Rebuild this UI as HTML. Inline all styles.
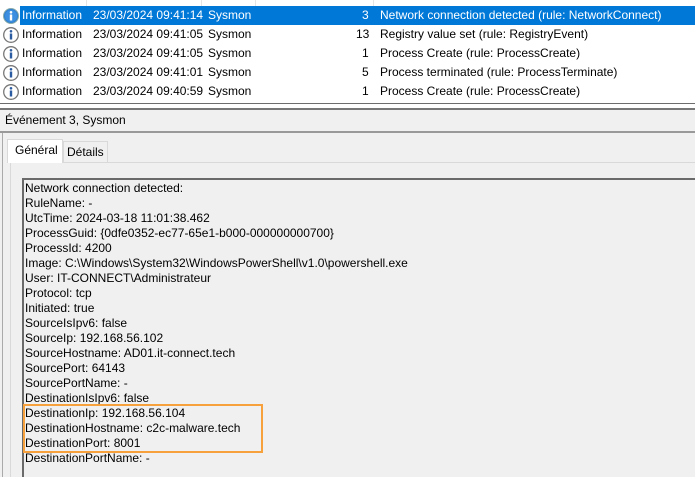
<!DOCTYPE html>
<html style="overflow:hidden;width:695px;height:477px"><head><meta charset="utf-8"><style>
*{margin:0;padding:0;box-sizing:border-box}
body{width:695px;height:477px;overflow:hidden;background:#f0f0f0;font-family:"Liberation Sans",sans-serif;font-size:12px;color:#000;position:relative}
.abs{position:absolute;white-space:nowrap}
.list{position:absolute;left:0;top:0;width:695px;height:103px;background:#fff}
.row{position:absolute;left:0;width:695px;height:19px;line-height:19px}
.sel{background:#0078d7;color:#fff}
.ic{position:absolute;left:3px;top:2px;width:16px;height:16px}
.line{position:absolute;left:0;width:695px}
.tl{position:absolute;left:25px;line-height:15px}
</style></head><body>
<div class="list">
 <div class="abs" style="left:86px;top:0;width:1px;height:6px;background:#e5e5e5"></div>
 <div class="abs" style="left:201px;top:0;width:1px;height:6px;background:#e5e5e5"></div>
 <div class="abs" style="left:255px;top:0;width:1px;height:6px;background:#e5e5e5"></div>
 <div class="abs" style="left:373px;top:0;width:1px;height:6px;background:#e5e5e5"></div>
</div>
<div class="row" style="top:6px"><div class="sel abs" style="left:20px;width:675px;height:19px;top:0"></div>
 <svg class="ic" viewBox="0 0 16 16"><circle cx="8" cy="8" r="7.5" fill="#2f7fd0" stroke="#8aa" stroke-width="1"/><circle cx="8" cy="8" r="6" fill="#3b8ee0"/><circle cx="8" cy="4.3" r="1.3" fill="#fff"/><rect x="6.8" y="6.5" width="2.4" height="6" fill="#fff"/></svg>
 <span class="abs" style="left:22px;color:#fff">Information</span><span class="abs" style="left:93px;color:#fff">23/03/2024 09:41:14</span><span class="abs" style="left:208px;color:#fff">Sysmon</span><span class="abs" style="left:362px;color:#fff">3</span><span class="abs" style="left:380px;color:#fff">Network connection detected (rule: NetworkConnect)</span></div>
<div class="row" style="top:25px">
 <svg class="ic" viewBox="0 0 16 16"><circle cx="8" cy="8" r="7.3" fill="#fff" stroke="#777" stroke-width="1.3"/><circle cx="8" cy="4.3" r="1.3" fill="#2a5aa0"/><rect x="6.8" y="6.5" width="2.4" height="6" fill="#2a5aa0"/></svg>
 <span class="abs" style="left:22px">Information</span><span class="abs" style="left:93px">23/03/2024 09:41:05</span><span class="abs" style="left:208px">Sysmon</span><span class="abs" style="left:356px">13</span><span class="abs" style="left:380px">Registry value set (rule: RegistryEvent)</span></div>
<div class="row" style="top:44px">
 <svg class="ic" viewBox="0 0 16 16"><circle cx="8" cy="8" r="7.3" fill="#fff" stroke="#777" stroke-width="1.3"/><circle cx="8" cy="4.3" r="1.3" fill="#2a5aa0"/><rect x="6.8" y="6.5" width="2.4" height="6" fill="#2a5aa0"/></svg>
 <span class="abs" style="left:22px">Information</span><span class="abs" style="left:93px">23/03/2024 09:41:05</span><span class="abs" style="left:208px">Sysmon</span><span class="abs" style="left:362px">1</span><span class="abs" style="left:380px">Process Create (rule: ProcessCreate)</span></div>
<div class="row" style="top:63px">
 <svg class="ic" viewBox="0 0 16 16"><circle cx="8" cy="8" r="7.3" fill="#fff" stroke="#777" stroke-width="1.3"/><circle cx="8" cy="4.3" r="1.3" fill="#2a5aa0"/><rect x="6.8" y="6.5" width="2.4" height="6" fill="#2a5aa0"/></svg>
 <span class="abs" style="left:22px">Information</span><span class="abs" style="left:93px">23/03/2024 09:41:01</span><span class="abs" style="left:208px">Sysmon</span><span class="abs" style="left:362px">5</span><span class="abs" style="left:380px">Process terminated (rule: ProcessTerminate)</span></div>
<div class="row" style="top:82px">
 <svg class="ic" viewBox="0 0 16 16"><circle cx="8" cy="8" r="7.3" fill="#fff" stroke="#777" stroke-width="1.3"/><circle cx="8" cy="4.3" r="1.3" fill="#2a5aa0"/><rect x="6.8" y="6.5" width="2.4" height="6" fill="#2a5aa0"/></svg>
 <span class="abs" style="left:22px">Information</span><span class="abs" style="left:93px">23/03/2024 09:40:59</span><span class="abs" style="left:208px">Sysmon</span><span class="abs" style="left:362px">1</span><span class="abs" style="left:380px">Process Create (rule: ProcessCreate)</span></div>
<div class="line" style="top:103px;height:1px;background:#6d6d6d"></div>
<div class="line" style="top:104px;height:5px;background:#fff"></div>
<div class="line" style="top:108px;height:2px;background:#777"></div>
<div class="abs" style="left:5px;top:113px;line-height:15px">Événement 3, Sysmon</div>
<div class="line" style="top:131px;height:2px;background:#999"></div>
<div class="abs" style="left:2px;top:133px;width:1px;height:344px;background:#aaa"></div>
<div class="abs" style="left:63px;top:141px;width:45px;height:21px;border:1px solid #d9d9d9;border-bottom:none;background:#f0f0f0"></div>
<div class="abs" style="left:67px;top:145px">Détails</div>
<div class="abs" style="left:10px;top:162px;width:685px;height:315px;border-left:1px solid #d9d9d9;border-top:1px solid #d9d9d9;background:#f0f0f0"></div>
<div class="abs" style="left:7px;top:139px;width:56px;height:24px;border:1px solid #d9d9d9;border-bottom:none;background:#fff"></div>
<div class="abs" style="left:15px;top:143px">Général</div>
<div class="abs" style="left:22px;top:178px;width:673px;height:299px;border-left:2px solid #6a6a6a;border-top:2px solid #6a6a6a"></div>
<div class="tl" style="top:181px">Network connection detected:<br>RuleName: -<br>UtcTime: 2024-03-18 11:01:38.462<br>ProcessGuid: {0dfe0352-ec77-65e1-b000-000000000700}<br>ProcessId: 4200<br>Image: C:\Windows\System32\WindowsPowerShell\v1.0\powershell.exe<br>User: IT-CONNECT\Administrateur<br>Protocol: tcp<br>Initiated: true<br>SourceIsIpv6: false<br>SourceIp: 192.168.56.102<br>SourceHostname: AD01.it-connect.tech<br>SourcePort: 64143<br>SourcePortName: -<br>DestinationIsIpv6: false<br>DestinationIp: 192.168.56.104<br>DestinationHostname: c2c-malware.tech<br>DestinationPort: 8001<br>DestinationPortName: -</div>
<div class="abs" style="left:23px;top:404px;width:240px;height:49px;border:2px solid #f7a13c"></div>
</body></html>
